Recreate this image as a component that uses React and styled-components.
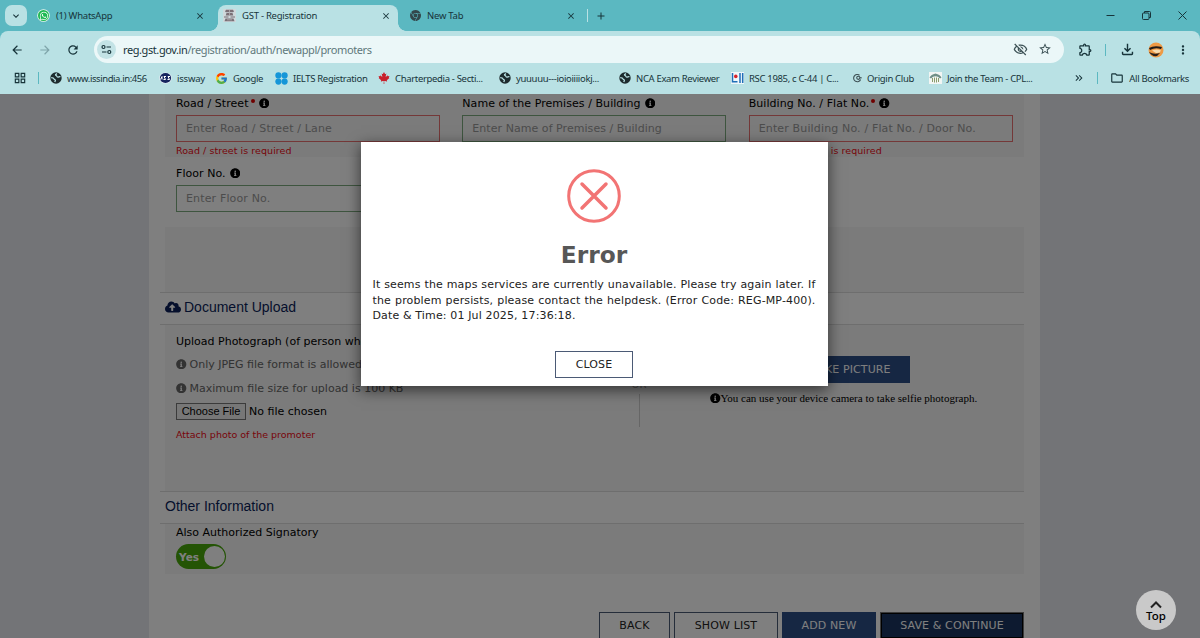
import React from 'react'
import styled, { createGlobalStyle } from 'styled-components'
import { FaCanadianMapleLeaf, FaCloudUploadAlt, FaInfoCircle, FaWhatsapp } from 'react-icons/fa'
import {
  MdArrowBack,
  MdArrowForward,
  MdClose,
  MdAdd,
  MdExpandMore,
  MdMoreVert,
  MdOutlineExtension,
  MdOutlineFileDownload,
  MdOutlineVisibilityOff,
  MdRefresh,
  MdStarOutline,
  MdOutlineFolder,
  MdOutlineGridView,
  MdKeyboardDoubleArrowRight,
} from 'react-icons/md'
import { FcGoogle } from 'react-icons/fc'
import { SiGooglechrome } from 'react-icons/si'

const GlobalStyle = createGlobalStyle`
  * { box-sizing: border-box; }
  body {
    margin: 0;
    overflow: hidden;
    font-family: 'DejaVu Sans', Verdana, sans-serif;
    font-size: 11px;
    color: #000;
  }
  svg { display: block; flex: none; }
`

/* ---------- browser window ---------- */

const Window = styled.div`
  width: 1200px;
  height: 638px;
  display: flex;
  flex-direction: column;
  overflow: hidden;
`

const Chrome = styled.header`
  height: 94px;
  flex: none;
  background: #5bb8c1;
  color: #17343a;
  font-family: 'Noto Sans', 'Open Sans', sans-serif;
  white-space: nowrap;
`

const TabStrip = styled.div`
  height: 31px;
  display: flex;
  align-items: stretch;
`

const TabMenu = styled.div`
  width: 22px;
  height: 21px;
  margin: 5px 6px 0 5px;
  border-radius: 7px;
  background: #b9e1e4;
  display: flex;
  align-items: center;
  justify-content: center;
`

const Tab = styled.div`
  width: ${p => p.$width}px;
  height: ${p => (p.$active ? 26 : 31)}px;
  align-self: flex-end;
  padding: 0 ${p => p.$end}px ${p => (p.$active ? 5 : 0)}px ${p => p.$start || 4}px;
  display: flex;
  align-items: center;
  gap: 6px;
  font-size: 9.5px;
  position: relative;
  border-radius: 8px 8px 0 0;
  background: ${p => (p.$active ? '#b9e1e4' : 'transparent')};

  &::before, &::after {
    content: '';
    display: ${p => (p.$active ? 'block' : 'none')};
    position: absolute;
    bottom: 0;
    width: 8px;
    height: 8px;
  }
  &::before {
    left: -8px;
    background: radial-gradient(circle at 0 0, transparent 7.5px, #b9e1e4 8px);
  }
  &::after {
    right: -8px;
    background: radial-gradient(circle at 100% 0, transparent 7.5px, #b9e1e4 8px);
  }
`

const TabTitle = styled.span`
  flex: 1;
  letter-spacing: -0.25px;
`

const TabDivider = styled.i`
  width: 1px;
  height: 13px;
  margin: 9px 7px 0 8px;
  background: #b9e1e4;
`

const NewTab = styled.div`
  padding-top: 10px;
`

const WindowButtons = styled.div`
  margin-left: auto;
  width: 81px;
  margin-right: 13px;
  display: flex;
  align-items: center;
  justify-content: space-between;
`

const Toolbars = styled.div`
  height: 63px;
  background: #b9e1e4;
  border-radius: 8px 8px 0 0;
`

const AddressRow = styled.div`
  height: 37px;
  padding: 0 10px;
  display: flex;
  align-items: center;
`

const NavButtons = styled.div`
  width: 84px;
  display: flex;
  gap: 14px;
`

const AddressBar = styled.div`
  width: 970px;
  height: 27px;
  padding: 0 12px 0 3px;
  border-radius: 14px;
  background: #ebf7f8;
  display: flex;
  align-items: center;
`

const SiteInfo = styled.span`
  width: 19px;
  height: 19px;
  margin-right: 7px;
  border-radius: 50%;
  background: #c3e3e6;
  display: flex;
  align-items: center;
  justify-content: center;
`

const Url = styled.span`
  flex: 1;
  font-size: 11px;
  letter-spacing: -0.41px;
  color: #60777b;
  b { font-weight: 400; color: #17343a; }
`

const BarIcons = styled.div`
  display: flex;
  gap: 10px;
  color: #3c5155;
`

const Actions = styled.div`
  flex: 1;
  padding-left: 14px;
  display: flex;
  align-items: center;
  justify-content: space-between;
`

const Separator = styled.i`
  width: 1px;
  height: 12px;
  margin: 0 ${p => p.$gap || 0}px;
  background: #5bb8c1;
`

const Bookmarks = styled.div`
  height: 21px;
  padding: 0 11px 1px 13px;
  display: flex;
  align-items: center;
  font-size: 9.5px;
`

const Bookmark = styled.span`
  width: ${p => (p.$width ? `${p.$width}px` : 'auto')};
  display: flex;
  align-items: center;
  gap: 5px;
  letter-spacing: ${p => p.$track ?? -0.33}px;
`

const BookmarkEnd = styled.div`
  margin-left: auto;
  display: flex;
  align-items: center;
  gap: 12px;
`

/* ---------- page ---------- */

const Page = styled.main`
  flex: 1;
  min-height: 0;
  position: relative;
  background: #e6e8ee;
  overflow: hidden;
`

const Content = styled.div`
  width: 891px;
  height: 544px;
  margin-left: 149px;
  padding: 0 16px;
  background: #fff;
`

const FormRow = styled.div`
  height: ${p => p.$height}px;
  padding-top: ${p => p.$top}px;
  background: ${p => (p.$shaded ? '#f6f6f6' : 'transparent')};
  display: grid;
  grid-template-columns: repeat(3, 1fr);
`

const Field = styled.div`
  padding: 0 11px;
`

const Label = styled.label`
  height: 18px;
  display: flex;
  align-items: center;
  white-space: nowrap;
  letter-spacing: 0.06px;
  svg { margin-left: 4px; }
`

const Required = styled.i`
  width: 4px;
  height: 4px;
  margin: -5px 0 0 2px;
  border-radius: 50%;
  background: #e00000;
`

const Input = styled.input`
  display: block;
  width: 264px;
  height: 27px;
  margin-top: 3px;
  padding: 0 9px;
  border: 1px solid ${p => (p.$invalid ? '#e87070' : '#7cab7e')};
  background: transparent;
  font: inherit;
  letter-spacing: ${p => p.$track ?? 0.15}px;
  outline: none;
  &::placeholder { color: #999; opacity: 1; }
`

const ErrorText = styled.div`
  margin-top: ${p => p.$top || 0}px;
  height: 16px;
  line-height: 16px;
  font-size: 9.5px;
  color: #f00a14;
  letter-spacing: ${p => p.$track || 0}px;
`

const Captcha = styled.div`
  height: 65px;
  margin-top: 15px;
  background: #f6f6f6;
`

const SectionTitle = styled.h4`
  height: 33px;
  margin: 0 0 0 -5px;
  padding: 0 0 3px 5px;
  border-top: 1px solid #dcdcdc;
  border-bottom: 1px solid #dcdcdc;
  display: flex;
  align-items: center;
  gap: 3px;
  font-family: 'Liberation Sans', Arial, sans-serif;
  font-size: 14px;
  font-weight: 400;
  color: #0b1e59;
`

const UploadPanel = styled.div`
  height: 166px;
  padding: 8px 11px 0;
  background: #f6f6f6;
  display: flex;
`

const UploadColumn = styled.div`
  width: 451px;
`

const Line = styled.div`
  height: 16px;
  margin-bottom: ${p => p.$gap}px;
  display: flex;
  align-items: center;
  gap: 3px;
  white-space: nowrap;
  color: ${p => (p.$muted ? '#666' : '#000')};
`

const FileButton = styled.button`
  height: 17px;
  width: 70px;
  padding: 0;
  border: 1px solid #767676;
  background: #efefef;
  font: 11px 'Liberation Sans', Arial, sans-serif;
  color: #000;
`

const OrDivider = styled.div`
  width: 24px;
  height: 94px;
  padding-top: 45px;
  display: flex;
  flex-direction: column;
  align-items: center;
  gap: 3px;
  font-size: 10px;
  line-height: 13px;
  color: #999;
  &::after {
    content: '';
    flex: 1;
    border-left: 1px solid #ccc;
  }
`

const CameraColumn = styled.div`
  flex: 1;
  padding: 23px 0 0 59px;
`

const CameraButtonRow = styled.div`
  width: 200px;
  display: flex;
  justify-content: flex-end;
`

const CameraNote = styled.p`
  margin: 9px 0 0;
  display: flex;
  align-items: center;
  font: 11px 'Liberation Serif', 'Times New Roman', serif;
  white-space: nowrap;
`

const Button = styled.button`
  height: 27px;
  width: ${p => p.$width}px;
  padding: 0;
  border: 1px solid ${p => (p.$primary ? '#2c4e86' : '#4b5a75')};
  background: ${p => (p.$focused ? '#1b3561' : p.$primary ? '#2c4e86' : 'transparent')};
  color: ${p => (p.$primary ? '#fff' : '#222')};
  font: inherit;
  letter-spacing: 0.12px;
  ${p => p.$focused && 'border: 2px solid #000; outline: 1px solid #777; outline-offset: -1px;'}
`

const SignatoryPanel = styled.div`
  height: 50px;
  padding: 0 11px;
  background: #f6f6f6;
`

const Toggle = styled.div`
  width: 50px;
  height: 25px;
  margin-top: 4px;
  padding: 0 1px 0 3px;
  border-radius: 13px;
  background: #48a80a;
  color: #fff;
  font-size: 10.5px;
  font-weight: 700;
  display: flex;
  align-items: center;
  justify-content: space-between;
  &::after {
    content: '';
    width: 21px;
    height: 21px;
    border-radius: 50%;
    background: #fff;
  }
`

const Footer = styled.div`
  margin-top: 38px;
  display: flex;
  justify-content: flex-end;
  gap: 4px;
`

const Backdrop = styled.div`
  position: absolute;
  inset: 0;
  padding: 48px 0 0 360.5px;
  background: rgba(0, 0, 0, 0.5);
`

const Modal = styled.section`
  width: 467px;
  height: 244px;
  padding: 27px 12px 0;
  background: #fff;
  box-shadow: 0 4px 14px rgba(0, 0, 0, 0.6);
  display: flex;
  flex-direction: column;
  align-items: center;
  h2 {
    margin: 17px 0 0;
    font-size: 23.3px;
    line-height: 30px;
    color: #575757;
  }
  p {
    margin: 7px 0 27px;
    width: 100%;
    line-height: 15.6px;
    letter-spacing: 0.14px;
    text-align: justify;
    color: #222;
  }
`

const TopButton = styled.div`
  position: absolute;
  right: 24px;
  bottom: 8px;
  width: 40px;
  height: 40px;
  border-radius: 50%;
  background: #c9c9c9;
  display: flex;
  flex-direction: column;
  align-items: center;
  padding-top: 11px;
  font: 500 11.5px 'Noto Sans', sans-serif;
  line-height: 14px;
`

/* ---------- small drawings ---------- */

const Globe = () => (
  <svg width="12" height="12" viewBox="0 0 12 12">
    <circle cx="6" cy="6" r="5.7" fill="#1d2b2e" />
    <path d="M1.2 5.6c2 0 2.6.3 2.8 1.2.2 1 1.600.5 1.400 1.600L4.800 10" fill="none" stroke="#b9e1e4" strokeWidth="1.3" />
    <path d="M7 1.600c-1.500.8-2 1.400-.8 1.900 1 .5.4 1.500 1.600 1.600 1 0 1.400-.6 2.600-.4" fill="none" stroke="#b9e1e4" strokeWidth="1.3" />
  </svg>
)

const Tune = () => (
  <svg width="11" height="11" viewBox="0 0 11 11" fill="none" stroke="#17343a" strokeWidth="1.2">
    <circle cx="2.5" cy="3" r="1.5" />
    <path d="M5.5 3H10M1 8h4.5" />
    <circle cx="8.3" cy="8" r="1.5" />
  </svg>
)

const Emblem = () => (
  <svg width="13" height="13" viewBox="0 0 13 13">
    <rect width="13" height="13" fill="#cfd9dc" />
    <path d="M3 .8h7l1 1.700-1 .8H3l-1-.8zM3.500 4h6l.8 2.500H2.700zM1 7.500h4.500v1H1zM7.500 7.500H12v1H7.500zM2.500 9.500h8l1 2.800h-10z" fill="#7b7077" />
    <path d="M6.500 1v5.500M4 10.800h5" stroke="#b5b0b5" strokeWidth=".8" />
  </svg>
)

const Issway = () => (
  <svg width="13" height="12" viewBox="0 0 13 12">
    <ellipse cx="6.5" cy="6" rx="6.3" ry="5.6" fill="#e6eef4" />
    <ellipse cx="6.5" cy="6" rx="5.6" ry="5" fill="#14245e" />
    <path d="M1.500 7.500 3 4.500v3M7 4.500H5l1.500 3h-2M11 4.500H9l1.500 3h-2" stroke="#fff" fill="none" />
  </svg>
)

const Ielts = () => (
  <svg width="13" height="13" viewBox="0 0 13 13" fill="#1596d8">
    <circle cx="3.4" cy="3.4" r="3.1" />
    <circle cx="9.6" cy="3.4" r="3.1" />
    <circle cx="3.4" cy="9.6" r="3.1" />
    <circle cx="9.6" cy="9.6" r="3.1" />
  </svg>
)

const Canlii = () => (
  <svg width="13" height="12" viewBox="0 0 13 12">
    <rect width="13" height="12" fill="#eef6fa" />
    <path d="M1.5 1v9.5M1.5 9.8h5M9 1v10M11.7 1v10" stroke="#1f6fb8" strokeWidth="1.5" />
    <circle cx="4.8" cy="4.4" r="1.8" fill="#d8232a" />
  </svg>
)

const Origin = () => (
  <svg width="9" height="9" viewBox="0 0 9 9" fill="none" stroke="#3d5054" strokeWidth="1.1">
    <path d="M6.5 1.3A3.6 3.6 0 1 0 7.6 5.5" />
    <circle cx="5.3" cy="3.8" r="1.6" />
    <path d="M6.9 3.8h1.8" />
  </svg>
)

const Team = () => (
  <svg width="13" height="12" viewBox="0 0 13 12">
    <rect width="13" height="12" fill="#f2f6f4" />
    <path d="M.5 5.500Q2 2.500 6.500 1.500q4.500 1 6 4L11 6.500Q9 4.300 6.500 4.200 4 4.300 2 6.500z" fill="#6f8f86" />
    <path d="M3.500 6v4M5.500 5.500v5M7.500 5.500v5M9.500 6v4" stroke="#8a9c6a" />
  </svg>
)

const Avatar = () => (
  <svg width="16" height="16" viewBox="0 0 16 16">
    <circle cx="8" cy="8" r="7.5" fill="#ee9a45" />
    <path d="M1 6q5-3 13-1l-1 2q-6-2-11 1z" fill="#1e1a18" />
    <path d="M4 8.5q5-2 9 0-1 3-5 2.500z" fill="#f7dcb0" />
    <path d="M1 10q5 3 11 1l-3 3q-5 1-8-4z" fill="#2a211c" />
  </svg>
)

const Caret = () => (
  <svg width="12" height="8" viewBox="0 0 12 8" fill="none" stroke="#222" strokeWidth="2">
    <path d="m1 6.5 5-5 5 5" />
  </svg>
)

const Info = () => <FaInfoCircle size={10.5} />

const BrowserChrome = () => (
  <Chrome>
    <TabStrip>
      <TabMenu><MdExpandMore size={12} /></TabMenu>
      <Tab $width={185} $end={13}>
        <svg width="13" height="13" viewBox="0 0 13 13">
          <circle cx="6.5" cy="6.5" r="6.3" fill="#e9f8ec" />
          <circle cx="6.5" cy="6.5" r="5.5" fill="#1fb954" />
          <FaWhatsapp x="2.2" y="2.2" width="8.6" height="8.6" color="#fff" />
        </svg>
        <TabTitle>(1) WhatsApp</TabTitle>
        <MdClose size={10} />
      </Tab>
      <Tab $active $width={180} $end={7} $start={5}>
        <Emblem />
        <TabTitle>GST - Registration</TabTitle>
        <MdClose size={10} />
      </Tab>
      <Tab $width={181} $end={3} $start={12}>
        <SiGooglechrome size={11} color="#33474b" />
        <TabTitle>New Tab</TabTitle>
        <MdClose size={10} />
      </Tab>
      <TabDivider />
      <NewTab><MdAdd size={12} /></NewTab>
      <WindowButtons>
        <svg width="9" height="9" viewBox="0 0 9 9" stroke="#17343a"><path d="M.5 4.5h8" /></svg>
        <svg width="9" height="9" viewBox="0 0 9 9" fill="none" stroke="#17343a">
          <rect x=".5" y="2" width="6.5" height="6.5" rx="1" />
          <path d="M2.5 2V.5h5q1 0 1 1v5H7" />
        </svg>
        <svg width="9" height="9" viewBox="0 0 9 9" stroke="#17343a"><path d="m.5.5 8 8M8.5.5l-8 8" /></svg>
      </WindowButtons>
    </TabStrip>
    <Toolbars>
      <AddressRow>
        <NavButtons>
          <MdArrowBack size={14} />
          <MdArrowForward size={14} color="#7fa5aa" />
          <MdRefresh size={14} />
        </NavButtons>
        <AddressBar>
          <SiteInfo><Tune /></SiteInfo>
          <Url><b>reg.gst.gov.in</b>/registration/auth/newappl/promoters</Url>
          <BarIcons>
            <MdOutlineVisibilityOff size={15} />
            <MdStarOutline size={14} />
          </BarIcons>
        </AddressBar>
        <Actions>
          <MdOutlineExtension size={15} />
          <Separator />
          <MdOutlineFileDownload size={17} />
          <Avatar />
          <MdMoreVert size={14} />
        </Actions>
      </AddressRow>
      <Bookmarks>
        <MdOutlineGridView size={14} />
        <Separator $gap={11} />
        <Bookmark $width={109} $track={-0.42}><Globe />www.issindia.in:456</Bookmark>
        <Bookmark $width={56} $track={-0.2}><Issway />issway</Bookmark>
        <Bookmark $width={60}><FcGoogle size={13} />Google</Bookmark>
        <Bookmark $width={103}><Ielts />IELTS Registration</Bookmark>
        <Bookmark $width={121}><FaCanadianMapleLeaf size={12} color="#c8202b" />Charterpedia - Secti...</Bookmark>
        <Bookmark $width={120}><Globe />yuuuuu---ioioiiiiokj...</Bookmark>
        <Bookmark $width={112}><Globe />NCA Exam Reviewer</Bookmark>
        <Bookmark $width={122}><Canlii />RSC 1985, c C-44 | C...</Bookmark>
        <Bookmark $width={76}><Origin />Origin Club</Bookmark>
        <Bookmark $width={110}><Team />Join the Team - CPL...</Bookmark>
        <BookmarkEnd>
          <MdKeyboardDoubleArrowRight size={12} />
          <Separator />
          <Bookmark><MdOutlineFolder size={14} />All Bookmarks</Bookmark>
        </BookmarkEnd>
      </Bookmarks>
    </Toolbars>
  </Chrome>
)

const ErrorModal = () => (
  <Modal>
    <svg width="54" height="54" viewBox="0 0 54 54" fill="none" stroke="#f27474" strokeWidth="3">
      <circle cx="27" cy="27" r="25.3" />
      <path d="m15 15 24 24M39 15 15 39" strokeWidth="3.5" strokeLinecap="round" />
    </svg>
    <h2>Error</h2>
    <p>
      It seems the maps services are currently unavailable. Please try again later. If
      the problem persists, please contact the helpdesk. (Error Code: REG-MP-400).
      Date &amp; Time: 01 Jul 2025, 17:36:18.
    </p>
    <Button $width={78}>CLOSE</Button>
  </Modal>
)

export default function App() {
  return (
    <Window>
      <GlobalStyle />
      <BrowserChrome />
      <Page>
        <Content>
          <FormRow $shaded $height={63}>
            <Field>
              <Label>Road / Street<Required /><Info /></Label>
              <Input $invalid placeholder="Enter Road / Street / Lane" />
              <ErrorText $top={1} $track={0.05}>Road / street is required</ErrorText>
            </Field>
            <Field>
              <Label>Name of the Premises / Building <Info /></Label>
              <Input $track={0.05} placeholder="Enter Name of Premises / Building" />
            </Field>
            <Field>
              <Label>Building No. / Flat No.<Required /><Info /></Label>
              <Input $invalid placeholder="Enter Building No. / Flat No. / Door No." />
              <ErrorText $top={1} $track={0.05}>Building/Flat No. is required</ErrorText>
            </Field>
          </FormRow>
          <FormRow $height={55} $top={7}>
            <Field>
              <Label>Floor No. <Info /></Label>
              <Input placeholder="Enter Floor No." />
            </Field>
          </FormRow>
          <Captcha />
          <SectionTitle><FaCloudUploadAlt size={16} />Document Upload</SectionTitle>
          <UploadPanel>
            <UploadColumn>
              <Line $gap={7}>Upload Photograph (of person whose information has</Line>
              <Line $muted $gap={8}><Info />Only JPEG file format is allowed</Line>
              <Line $muted $gap={7}><Info />Maximum file size for upload is 100 KB</Line>
              <Line $gap={8}><FileButton>Choose File</FileButton>No file chosen</Line>
              <ErrorText>Attach photo of the promoter</ErrorText>
            </UploadColumn>
            <OrDivider>OR</OrDivider>
            <CameraColumn>
              <CameraButtonRow><Button $primary $width={118}>TAKE PICTURE</Button></CameraButtonRow>
              <CameraNote><Info />You can use your device camera to take selfie photograph.</CameraNote>
            </CameraColumn>
          </UploadPanel>
          <SectionTitle>Other Information</SectionTitle>
          <SignatoryPanel>
            <Line $gap={0}>Also Authorized Signatory</Line>
            <Toggle>Yes</Toggle>
          </SignatoryPanel>
          <Footer>
            <Button $width={71}>BACK</Button>
            <Button $width={104}>SHOW LIST</Button>
            <Button $primary $width={94}>ADD NEW</Button>
            <Button $primary $focused $width={144}>SAVE &amp; CONTINUE</Button>
          </Footer>
        </Content>
        <Backdrop><ErrorModal /></Backdrop>
        <TopButton><Caret />Top</TopButton>
      </Page>
    </Window>
  )
}
